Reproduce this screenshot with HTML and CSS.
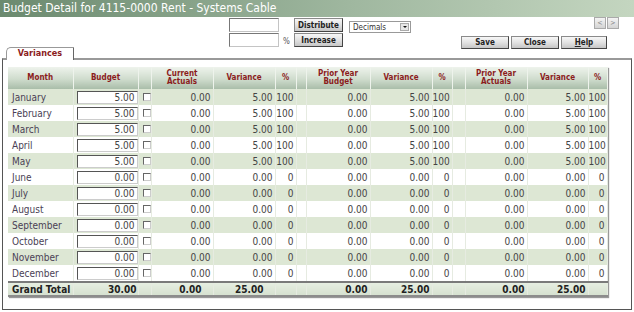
FILE: index.html
```html
<!DOCTYPE html>
<html lang="en">
<head>
  <meta charset="UTF-8">
  <title>Budget Detail</title>
  <link rel="stylesheet" href="styles.css">
</head>
<body>
  <div class="window">
    <!-- Title -->
    <div class="titlebar">Budget Detail for 4115-0000 Rent - Systems Cable</div>

    <!-- Toolbar -->
    <div class="toolbar">
      <div class="toolbar-left">
        <div class="tools">
          <div class="fields">
            <input class="field" type="text">
            <div class="field-row">
              <input class="field" type="text">
              <span class="pct">%</span>
            </div>
          </div>
          <div class="tool-buttons">
            <button class="btn">Distribute</button>
            <button class="btn">Increase</button>
          </div>
          <div class="select">
            <span class="select-text">Decimals</span>
            <span class="select-arrow"></span>
          </div>
        </div>
        <div class="tab">Variances</div>
      </div>
      <div class="toolbar-right">
        <div class="pager">
          <button class="nav">&lt;</button>
          <button class="nav">&gt;</button>
        </div>
        <div class="actions">
          <button class="btn act">Save</button>
          <button class="btn act">Close</button>
          <button class="btn act help"><u>H</u>elp</button>
        </div>
      </div>
    </div>

    <!-- Variances panel -->
    <div class="panel">
      <table class="grid">
        <colgroup>
          <col style="width:65px"><col style="width:65px"><col style="width:13px">
          <col style="width:62px"><col style="width:62px"><col style="width:21px"><col style="width:10px">
          <col style="width:64px"><col style="width:62px"><col style="width:20px"><col style="width:13px">
          <col style="width:62px"><col style="width:61px"><col style="width:19px">
        </colgroup>
        <thead>
          <tr>
            <th>Month</th><th>Budget</th><th></th>
            <th>Current<br>Actuals</th><th>Variance</th><th>%</th><th></th>
            <th>Prior Year<br>Budget</th><th>Variance</th><th>%</th><th></th>
            <th>Prior Year<br>Actuals</th><th>Variance</th><th>%</th>
          </tr>
        </thead>
        <tbody id="rows"></tbody>
        <tfoot>
          <tr class="total">
            <td class="month">Grand Total</td>
            <td class="num tight">30.00</td>
            <td></td>
            <td class="num shift">0.00</td>
            <td class="num shift">25.00</td>
            <td></td><td></td>
            <td class="num">0.00</td>
            <td class="num">25.00</td>
            <td></td><td></td>
            <td class="num">0.00</td>
            <td class="num">25.00</td>
            <td></td>
          </tr>
        </tfoot>
      </table>
    </div>
  </div>

  <script>
    const months = ["January", "February", "March", "April", "May", "June",
      "July", "August", "September", "October", "November", "December"];
    const rows = document.getElementById("rows");

    months.forEach((month, i) => {
      const amount = i < 5 ? "5.00" : "0.00";
      const pct = i < 5 ? "100" : "0";
      const tr = document.createElement("tr");
      if (i % 2 === 0) tr.classList.add("alt");
      tr.innerHTML = `
        <td class="month">${month}</td>
        <td class="budget"><input class="amount" type="text" value="${amount}"></td>
        <td class="check"><input class="chk" type="checkbox"></td>
        <td class="num">0.00</td>
        <td class="num">${amount}</td>
        <td class="num">${pct}</td>
        <td></td>
        <td class="num">0.00</td>
        <td class="num">${amount}</td>
        <td class="num">${pct}</td>
        <td></td>
        <td class="num">0.00</td>
        <td class="num">${amount}</td>
        <td class="num">${pct}</td>`;
      rows.appendChild(tr);
    });
  </script>
</body>
</html>
```

FILE: styles.css
```css
body {
  margin: 0;
  font-family: "DejaVu Sans Condensed", "DejaVu Sans", sans-serif;
  font-size: 10px;
  background: #ffffff;
  color: #444;
}

.window {
  width: 634px;
  height: 312px;
  display: flex;
  flex-direction: column;
}

.titlebar {
  height: 17px;
  line-height: 17px;
  padding-left: 3px;
  font-size: 12px;
  color: #ffffff;
  background: linear-gradient(to right, #6b8a6f, #9fb79f 55%, #c4d6c0);
}

/* Toolbar */
.toolbar {
  display: flex;
  height: 41px;
}

.toolbar-left {
  flex: 1;
  display: flex;
  flex-direction: column;
}

.tools {
  display: flex;
  height: 30px;
  padding: 1px 0 0 229px;
  box-sizing: border-box;
}

.fields {
  width: 65px;
  display: flex;
  flex-direction: column;
  gap: 1px;
}

.field-row {
  display: flex;
  align-items: flex-end;
}

.field {
  width: 50px;
  height: 14px;
  box-sizing: border-box;
  margin: 0;
  padding: 0;
  border: 1px solid #c4c4c4;
  border-top-color: #777;
  border-left-color: #777;
  background: #fff;
}

.pct {
  margin-left: 4px;
  font-size: 8px;
  line-height: 10px;
  color: #555;
}

.tool-buttons {
  width: 49px;
  display: flex;
  flex-direction: column;
  gap: 1px;
}

.btn {
  height: 14px;
  margin: 0;
  padding: 0;
  font-family: inherit;
  font-size: 8px;
  font-weight: bold;
  color: #222;
  border: 1px solid #8a8a8a;
  border-right-color: #444;
  border-bottom-color: #444;
  background: linear-gradient(#f7f7f7, #e2e2e2 50%, #c6c6c6);
}

.select {
  width: 62px;
  height: 12px;
  margin: 3px 0 0 6px;
  box-sizing: border-box;
  display: flex;
  align-items: center;
  justify-content: space-between;
  border: 1px solid #999;
  background: #fff;
}

.select-text {
  padding-left: 3px;
  font-size: 8px;
  color: #333;
}

.select-arrow {
  width: 9px;
  height: 8px;
  margin-right: 1px;
  box-sizing: border-box;
  border: 1px solid #aaa;
  background: #e6e6e6;
  display: flex;
  align-items: center;
  justify-content: center;
}

.select-arrow::after {
  content: "";
  border-left: 2px solid transparent;
  border-right: 2px solid transparent;
  border-top: 2px solid #111;
}

.tab {
  width: 68px;
  height: 13px;
  margin: 0 0 -2px 6px;
  box-sizing: border-box;
  position: relative;
  z-index: 1;
  text-align: center;
  font-size: 9px;
  font-weight: bold;
  line-height: 11px;
  color: #8b2020;
  background: #fff;
  border: 1px solid #999;
  border-right-color: #666;
  border-bottom: none;
  border-top-left-radius: 5px;
}

.toolbar-right {
  display: flex;
  flex-direction: column;
  align-items: flex-end;
}

.pager {
  display: flex;
  gap: 1px;
  margin-right: 15px;
}

.nav {
  width: 12px;
  height: 12px;
  margin: 0;
  padding: 0;
  font-family: inherit;
  font-size: 7px;
  line-height: 9px;
  color: #888;
  border: 1px solid #aaa;
  background: linear-gradient(#f4f4f4, #d4d4d4);
}

.actions {
  display: flex;
  gap: 2px;
  margin: 7px 27px 0 0;
}

.act {
  width: 48px;
  height: 13px;
}

.act.help {
  width: 46px;
}

/* Panel */
.panel {
  flex: 1;
  margin: 0 2px 2px 2px;
  padding: 7px 0 0 5px;
  border: 1px solid #555;
  border-top: 2px solid #999;
}

.grid {
  width: 599px;
  table-layout: fixed;
  border-collapse: collapse;
  box-shadow: 1px 1px 1px #999;
}

.grid th {
  height: 22px;
  padding: 0;
  font-size: 8px;
  font-weight: bold;
  line-height: 8px;
  color: #8b1c1c;
  text-align: center;
  border-right: 1px solid #eef3ec;
  background: linear-gradient(#eef3ec, #cfdccd 55%, #a9bda9);
}

.grid td {
  height: 16px;
  padding: 0;
  white-space: nowrap;
  border-right: 1px solid #e6ebe1;
}

.grid tr.alt td {
  background: #dde7d4;
}

.month {
  padding-left: 4px !important;
  color: #4a3f55;
}

.num {
  text-align: right;
  padding-right: 2px !important;
}

.budget {
  padding-left: 3px !important;
}

.amount {
  width: 61px;
  height: 13px;
  box-sizing: border-box;
  margin: 0;
  padding: 0 2px 0 0;
  font-family: inherit;
  font-size: 10px;
  text-align: right;
  color: #444;
  background: #fff;
  border: 1px solid #ccc;
  border-top-color: #555;
  border-left-color: #555;
  display: block;
}

.check {
  padding-left: 4px !important;
}

.chk {
  appearance: none;
  width: 8px;
  height: 8px;
  margin: 0;
  display: block;
  background: #fff;
  border: 1px solid #ccc;
  border-top-color: #666;
  border-left-color: #666;
}

.grid tr.total td {
  height: 12px;
  font-weight: bold;
  color: #222;
  background: linear-gradient(#e6eee1, #d6e1d0);
  border-top: 2px solid #7a7a7a;
  border-bottom: 2px solid #8c8c8c;
}

.total .month {
  color: #222;
}

.total .tight {
  padding-right: 1px !important;
}

.total .shift {
  padding-right: 11px !important;
}
```
